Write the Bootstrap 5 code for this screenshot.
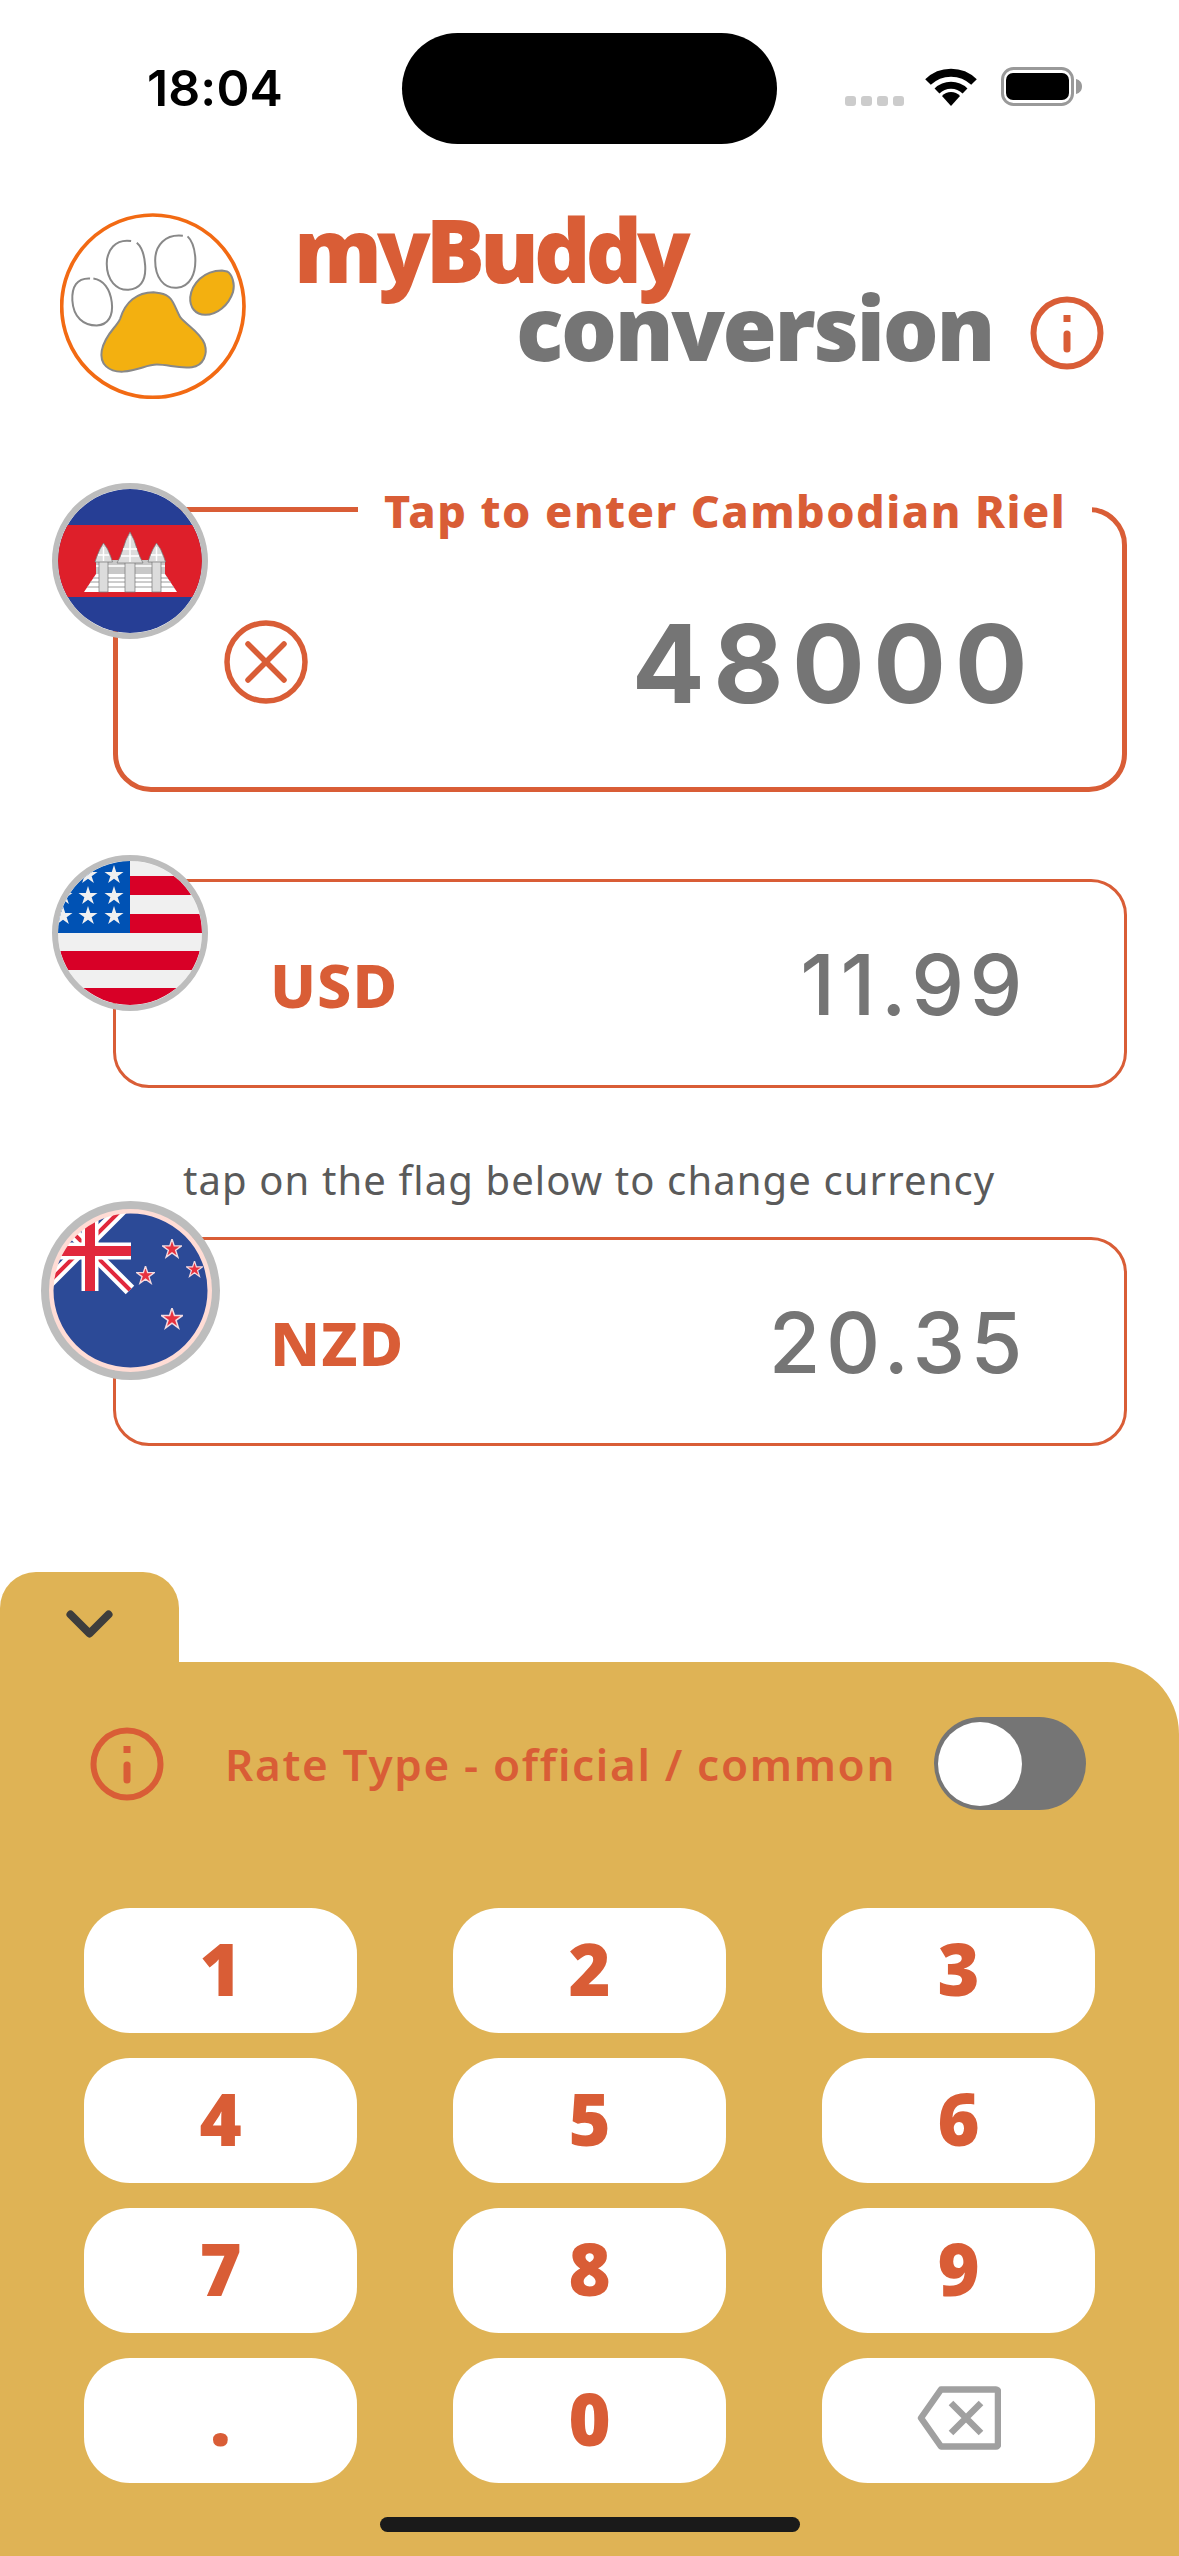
<!DOCTYPE html>
<html lang="en">
<head>
<meta charset="UTF-8">
<meta name="viewport" content="width=device-width, initial-scale=1.0">
<title>myBuddy conversion</title>
<link href="https://cdn.jsdelivr.net/npm/bootstrap@5.3.0/dist/css/bootstrap.min.css" rel="stylesheet">
<style>
    body { background: #fff; font-family: "Noto Sans", Lato, sans-serif; }
    .app-screen { width: 1179px; height: 2556px; overflow: hidden; }

    .status-row { display: grid; grid-template-columns: 402px 375px 1fr; height: 144px; padding-top: 33px; }
    .status-time { padding-left: 147px; font: 600 50px/111px Inter, sans-serif; color: #000; letter-spacing: .1px; }
    .island { height: 111px; background: #000; border-radius: 56px; }
    .status-icons { padding: 35px 0 0 68px; }
    .sig-dot { width: 11px; height: 10px; border-radius: 3px; background: #ccc; margin-right: 5px; margin-top: 28px; }

    .head-row { padding: 69px 0 0 60px; height: 363px; }
    .title-wrap { margin-left: 48px; width: 736px; }
    .title-one { font-size: 88px; font-weight: 900; line-height: 76px; color: #d95d36; margin-top: -2px; letter-spacing: -5px; }
    .title-two { font-size: 88px; font-weight: 900; line-height: 81px; color: #757575; margin-left: 222px; letter-spacing: -2.4px; }
    .head-info { margin: 83px 0 0 0; }

    .conv-card { margin-left: 113px; width: 1014px; border: 3px solid #d95d36; border-radius: 36px; background: #fff; height: 209px; }
    .conv-card.active-card { border-width: 5.5px; height: 285px; border-radius: 38px; margin-bottom: 87px; }
    .flag-disc { position: absolute; left: -64px; top: -27.5px; }
    .active-card .flag-disc { left: -66.5px; top: -29px; }
    .flag-big { left: -75px; top: -39.5px; }
    .card-legend { position: absolute; left: 240px; top: -28px; padding: 0 26px; background: #fff; font-size: 45px; font-weight: 800; line-height: 54px; color: #d95d36; letter-spacing: 1.5px; white-space: nowrap; }
    .clear-btn { position: absolute; left: 106px; top: 108px; }
    .amount-big { position: absolute; right: 86px; top: 94px; font: 700 108px/116px Inter, sans-serif; color: #757575; letter-spacing: 8.5px; }
    .code-txt { position: absolute; left: 154px; top: 78px; font-size: 61px; font-weight: 800; line-height: 50px; color: #d95d36; letter-spacing: 1px; }
    .amount-txt { position: absolute; right: 96px; top: 56px; font: 500 84px/94px Inter, sans-serif; color: #757575; letter-spacing: 5.5px; }
    .hint-txt { height: 149px; margin: 0; padding: 67px 0 0 183px; font-size: 40px; line-height: 50px; color: #5a5a5a; letter-spacing: 1.1px; }

    .tab-handle { width: 179px; height: 90px; background: #dfb355; border-radius: 36px 36px 0 0; padding: 38px 0 0 66px; }
    .pad-sheet { height: 894px; background: #dfb355; border-top-right-radius: 72px; padding-top: 55px; }
    .rate-row { padding: 0 93px 0 90px; height: 93px; }
    .rate-txt { margin-left: 61px; font-size: 44px; font-weight: 600; line-height: 54px; color: #d95d36; letter-spacing: 1.7px; white-space: nowrap; }
    .rate-switch { margin-left: auto; width: 152px; height: 93px; border-radius: 47px; background: #757575; padding: 5px 0 0 4px; }
    .rate-knob { width: 84px; height: 84px; border-radius: 50%; background: #fff; }
    .key-grid { display: grid; grid-template-columns: repeat(3, 273px); column-gap: 96px; row-gap: 25px; padding-left: 84px; margin-top: 98px; }
    .key-btn { height: 125px; border: 0; border-radius: 46px; background: #fff; color: #d95d36; font-size: 72px; font-weight: 900; line-height: 1; padding: 0 0 6px; }
    .key-btn:hover, .key-btn:active { background: #fff; color: #d95d36; }
    .home-bar { width: 420px; height: 15px; border-radius: 8px; background: #1a1a1a; margin: 34px 0 0 380px; }
</style>
</head>
<body>
<svg width="0" height="0" class="position-absolute">
    <symbol id="star5" viewBox="-1 -1 2 2"><polygon points="0,-1 .224,-.309 .951,-.309 .363,.118 .588,.809 0,.382 -.588,.809 -.363,.118 -.951,-.309 -.224,-.309"/></symbol>
</svg>
<div class="app-screen d-flex flex-column">

    <div class="status-row">
        <div class="status-time">18:04</div>
        <div class="island"></div>
        <div class="status-icons d-flex">
            <div class="sig-dot"></div><div class="sig-dot"></div><div class="sig-dot"></div><div class="sig-dot"></div>
            <svg class="ms-3" width="52" height="38" viewBox="0 0 52 38">
                <path d="M3 14a33 33 0 0 1 46 0" fill="none" stroke="#000" stroke-width="8"/>
                <path d="M12 23a20 20 0 0 1 28 0" fill="none" stroke="#000" stroke-width="7"/>
                <path d="M26 38l-9-10a12 12 0 0 1 18 0z"/>
            </svg>
            <svg class="ms-4" width="82" height="40" viewBox="0 0 82 40" style="margin-top:-1px">
                <rect x="1.5" y="1.5" width="70" height="36" rx="11" fill="none" stroke="#999" stroke-width="3"/>
                <rect x="5" y="6" width="63" height="27" rx="7"/>
                <path d="M75 12c4 1 6 4 6 7.500s-2 6.500-6 7.500z" fill="#999"/>
            </svg>
        </div>
    </div>

    <div class="head-row d-flex align-items-start">
        <svg width="186" height="186" viewBox="60 68 557 557">
            <circle cx="338" cy="347" r="273" fill="#fff" stroke="#f26a13" stroke-width="11"/>
            <g fill="#fff" stroke="#888" stroke-width="6">
                <path d="M150 264C110 262 95 290 97 330C100 380 130 405 170 405C205 403 220 375 215 335C210 295 190 268 160 264"/>
                <path d="M273 152C225 145 200 180 200 220C200 270 230 300 265 298C300 295 318 270 315 225C313 195 305 170 290 157"/>
                <path d="M428 136C375 130 345 165 345 210C345 260 370 295 410 292C450 288 468 250 465 200C463 175 455 150 442 138"/>
            </g>
            <g fill="#f3b010" stroke="#888" stroke-width="6">
                <path d="M545 240C490 240 455 280 450 320C448 350 465 373 495 373C530 373 565 345 578 305C585 280 575 250 560 243Z"/>
                <path d="M340 305C290 305 255 335 240 385C230 410 195 430 185 480C178 520 205 545 250 543C295 540 320 522 350 522C385 522 415 535 455 530C490 525 503 490 493 460C480 425 440 405 420 380C400 345 400 315 360 308Z"/>
            </g>
        </svg>
        <div class="title-wrap">
            <div class="title-one">myBuddy</div>
            <div class="title-two">conversion</div>
        </div>
        <svg class="head-info" width="74" height="74" viewBox="0 0 74 74" fill="none" stroke="#d95d36">
            <circle cx="37" cy="37" r="33.500" stroke-width="6"/>
            <path d="M37 19v7" stroke-width="7"/>
            <path d="M37 38v15" stroke-width="7" stroke-linecap="round"/>
        </svg>
    </div>

    <div class="conv-card active-card card position-relative">
        <svg class="flag-disc" width="156" height="156" viewBox="0 0 156 156">
            <defs><clipPath id="clipKh"><circle cx="78" cy="78" r="72"/></clipPath></defs>
            <g clip-path="url(#clipKh)">
                <rect width="156" height="156" fill="#263e95"/>
                <rect y="42" width="156" height="72" fill="#de1f2a"/>
                <path d="M44 91h69l12 18H32z" fill="#fff"/>
                <path d="M41 95h75M38 99h81M35 104h87" stroke="#9a9a9a" stroke-width="1"/>
                <rect x="44" y="77" width="69" height="14" fill="#c8c8c8"/>
                <path d="M44 83h69" stroke="#f4f4f4" stroke-width="2"/>
                <g fill="#dcdcdc" stroke="#777" stroke-width=".7">
                    <rect x="47" y="78" width="9" height="31"/>
                    <rect x="73" y="78" width="10" height="31"/>
                    <rect x="100" y="78" width="9" height="31"/>
                    <path d="M51.500 60l4 6 3 7 2 6H43l2-6 3-7z"/>
                    <path d="M104.500 60l4 6 3 7 2 6H96l2-6 3-7z"/>
                    <path d="M78 49l4 8 3 9 3 8 3 6H65l3-6 3-8 3-9z"/>
                </g>
                <path d="M51.500 64v14M104.500 64v14M78 53v26M46 72h11M99 72h11M71 66h14M69 73h18" stroke="#fff" stroke-width="1.500"/>
            </g>
            <circle cx="78" cy="78" r="75" fill="none" stroke="#bdbdbd" stroke-width="6"/>
        </svg>
        <span class="card-legend">Tap to enter Cambodian Riel</span>
        <svg class="clear-btn" width="84" height="84" viewBox="0 0 84 84" fill="none" stroke="#d95d36" stroke-width="5.500" stroke-linecap="round">
            <circle cx="42" cy="42" r="39"/>
            <path d="M24 24l36 36M60 24L24 60"/>
        </svg>
        <span class="amount-big">48000</span>
    </div>

    <div class="conv-card card position-relative">
        <svg class="flag-disc" width="156" height="156" viewBox="0 0 156 156">
            <defs><clipPath id="clipUs"><circle cx="78" cy="78" r="72"/></clipPath></defs>
            <g clip-path="url(#clipUs)">
                <rect width="156" height="156" fill="#f0f0f0"/>
                <path d="M78 21h78v19H78zM78 59h78v19H78zM0 96h156v19H0zM0 133h156v23H0z" fill="#d80027"/>
                <rect width="78" height="78" fill="#0052b4"/>
                <g fill="#f0f0f0">
                    <use href="#star5" x="52" y="10" width="20" height="20"/>
                    <use href="#star5" x="26" y="10" width="20" height="20"/>
                    <use href="#star5" x="52" y="31" width="20" height="20"/>
                    <use href="#star5" x="26" y="31" width="20" height="20"/>
                    <use href="#star5" x="1" y="31" width="20" height="20"/>
                    <use href="#star5" x="52" y="51" width="20" height="20"/>
                    <use href="#star5" x="26" y="51" width="20" height="20"/>
                    <use href="#star5" x="1" y="51" width="20" height="20"/>
                </g>
            </g>
            <circle cx="78" cy="78" r="75" fill="none" stroke="#bdbdbd" stroke-width="6"/>
        </svg>
        <span class="code-txt">USD</span>
        <span class="amount-txt">11.99</span>
    </div>

    <p class="hint-txt">tap on the flag below to change currency</p>

    <div class="conv-card card position-relative">
        <svg class="flag-disc flag-big" width="179" height="179" viewBox="0 0 179 179">
            <defs><clipPath id="clipNz"><circle cx="89.500" cy="89.500" r="78"/></clipPath></defs>
            <g clip-path="url(#clipNz)">
                <rect width="179" height="179" fill="#2c4a97"/>
                <path d="M0 0l89 89M0 89L89 0" stroke="#fff" stroke-width="12"/>
                <path d="M0 0l89 89M0 89L89 0" stroke="#e1283c" stroke-width="4"/>
                <path d="M49 0v90M0 50h90" stroke="#fff" stroke-width="17"/>
                <path d="M49 0v90M0 50h90" stroke="#e1283c" stroke-width="10"/>
                <g fill="#e8323f" stroke="#f4dbe0" stroke-width=".14">
                    <use href="#star5" x="121" y="38" width="20" height="20"/>
                    <use href="#star5" x="145" y="60" width="17" height="17"/>
                    <use href="#star5" x="95" y="65" width="19" height="19"/>
                    <use href="#star5" x="120" y="107" width="22" height="22"/>
                </g>
            </g>
            <circle cx="89.500" cy="89.500" r="79.500" fill="none" stroke="#ffdcd5" stroke-width="5"/>
            <circle cx="89.500" cy="89.500" r="85.500" fill="none" stroke="#bdbdbd" stroke-width="8"/>
        </svg>
        <span class="code-txt">NZD</span>
        <span class="amount-txt">20.35</span>
    </div>

    <div class="mt-auto">
        <div class="tab-handle">
            <svg width="47" height="28" viewBox="0 0 47 28" class="d-block"><path d="M4.500 4.500l19 19 19-19" fill="none" stroke="#3d3d3d" stroke-width="8" stroke-linecap="round" stroke-linejoin="round"/></svg>
        </div>
        <div class="pad-sheet">
            <div class="rate-row d-flex align-items-center">
                <svg width="74" height="74" viewBox="0 0 74 74" fill="none" stroke="#d95d36">
                    <circle cx="37" cy="37" r="33.500" stroke-width="6"/>
                    <path d="M37 19v7" stroke-width="7"/>
                    <path d="M37 38v15" stroke-width="7" stroke-linecap="round"/>
                </svg>
                <span class="rate-txt">Rate Type - official / common</span>
                <div class="rate-switch"><div class="rate-knob"></div></div>
            </div>
            <div class="key-grid">
                <button class="btn key-btn">1</button>
                <button class="btn key-btn">2</button>
                <button class="btn key-btn">3</button>
                <button class="btn key-btn">4</button>
                <button class="btn key-btn">5</button>
                <button class="btn key-btn">6</button>
                <button class="btn key-btn">7</button>
                <button class="btn key-btn">8</button>
                <button class="btn key-btn">9</button>
                <button class="btn key-btn">.</button>
                <button class="btn key-btn">0</button>
                <button class="btn key-btn">
                    <svg width="84" height="64" viewBox="0 0 84 64" fill="none" stroke="#a0a0a0" stroke-width="6.500" class="d-block mx-auto">
                        <path d="M79 3.500H24L4 32l20 28.500h55a2 2 0 0 0 2-2v-53a2 2 0 0 0-2-2z" stroke-linejoin="round"/>
                        <path d="M34 17l30 30M64 17L34 47"/>
                    </svg>
                </button>
            </div>
            <div class="home-bar"></div>
        </div>
    </div>
</div>
</body>
</html>
